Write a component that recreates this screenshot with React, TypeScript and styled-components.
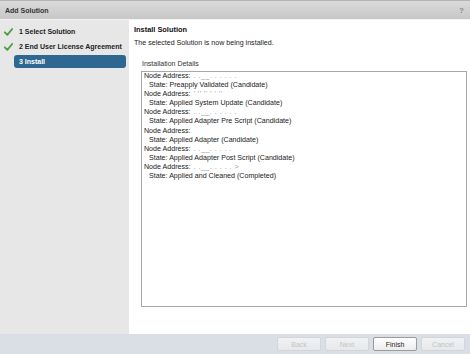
import styled, { createGlobalStyle } from "styled-components";

const GlobalStyle = createGlobalStyle`
  html, body {
    margin: 0;
    padding: 0;
  }
  body {
    font-family: "Liberation Sans", Arial, sans-serif;
    color: #222;
  }
`;

const Window = styled.div`
  width: 470px;
  height: 354px;
  display: flex;
  flex-direction: column;
  overflow: hidden;
  background: #fff;
`;

const TitleBar = styled.div`
  height: 18px;
  flex: none;
  display: flex;
  align-items: center;
  justify-content: space-between;
  padding: 0 6px 0 5px;
  border-top: 1px solid #b4b4b4;
  border-bottom: 1px solid #f2f2f2;
  background: linear-gradient(#dbdbdb, #c7c7c7);
`;

const Title = styled.span`
  font-size: 7px;
  font-weight: bold;
  color: #333;
`;

const Help = styled.span`
  font-size: 8px;
  font-weight: bold;
  color: #8a8a8a;
`;

const Body = styled.div`
  flex: 1;
  display: flex;
  min-height: 0;
`;

const Sidebar = styled.nav`
  width: 129px;
  flex: none;
  background: #e7e7e7;
  padding-top: 5px;
  display: flex;
  flex-direction: column;
  gap: 2px;
`;

const Step = styled.div`
  height: 13px;
  display: flex;
  align-items: center;
`;

const Gutter = styled.div`
  width: 14px;
  flex: none;
  display: flex;
  align-items: center;
  padding-left: 4px;
  box-sizing: border-box;
`;

const StepLabel = styled.div<{ $active?: boolean }>`
  flex: 1;
  height: 13px;
  margin-right: 3px;
  padding-left: 5px;
  display: flex;
  align-items: center;
  font-size: 7px;
  font-weight: bold;
  border-radius: 3px;
  color: ${({ $active }) => ($active ? "#fff" : "#222")};
  background: ${({ $active }) => ($active ? "#2d6792" : "transparent")};
`;

const Content = styled.main`
  flex: 1;
  display: flex;
  flex-direction: column;
  padding: 5px 3px 27px 5px;
`;

const Heading = styled.div`
  font-size: 7.4px;
  font-weight: bold;
  line-height: 10px;
  color: #111;
`;

const Subtitle = styled.div`
  font-size: 7.1px;
  line-height: 10px;
  margin-top: 2.5px;
  color: #222;
`;

const FieldLabel = styled.div`
  font-size: 7px;
  line-height: 10px;
  margin: 11px 0 0 8px;
  color: #333;
`;

const LogBox = styled.div`
  flex: 1;
  margin: 2.5px 0 0 7px;
  border: 1px solid #a8a8a8;
  padding: 0 0 0 1px;
  font-size: 7.1px;
  line-height: 9.1px;
  color: #222;
`;

const LogLine = styled.div<{ $indent?: boolean }>`
  padding-left: ${({ $indent }) => ($indent ? "6px" : "1px")};
  white-space: nowrap;
`;

const Masked = styled.span`
  color: #9c9c9c;
  margin-left: 3px;
  letter-spacing: 0.5px;
`;

const Footer = styled.footer`
  height: 20px;
  flex: none;
  background: #d9dfe5;
  display: flex;
  align-items: center;
  justify-content: flex-end;
  gap: 4px;
  padding-right: 5px;
`;

const Button = styled.button<{ $disabled?: boolean }>`
  width: 44px;
  height: 14px;
  padding: 0;
  font-family: "Liberation Sans", Arial, sans-serif;
  font-size: 7px;
  border-radius: 2px;
  border: 1px solid ${({ $disabled }) => ($disabled ? "#d3d6d9" : "#9c9c9c")};
  color: ${({ $disabled }) => ($disabled ? "#c2c4c6" : "#222")};
  background: ${({ $disabled }) =>
    $disabled ? "linear-gradient(#f1f2f3, #e6e8ea)" : "linear-gradient(#ffffff, #ececec)"};
`;

const Check = () => (
  <svg width="9" height="8" viewBox="0 0 9 8">
    <path d="M0.8 4.3 L3.3 6.8 L8.2 1" fill="none" stroke="#4ea047" strokeWidth="1.9" strokeLinecap="round" strokeLinejoin="round" />
  </svg>
);

const steps = [
  { label: "1  Select Solution", done: true },
  { label: "2  End User License Agreement", done: true },
  { label: "3  Install", active: true },
];

const log = [
  { node: ". .__. . . . . .", state: "Preapply Validated (Candidate)" },
  { node: "' '' '' ' ' ''", state: "Applied System Update (Candidate)" },
  { node: ". .__. . . . . .", state: "Applied Adapter Pre Script (Candidate)" },
  { node: "", state: "Applied Adapter (Candidate)" },
  { node: ". .__. . . . .", state: "Applied Adapter Post Script (Candidate)" },
  { node: ". .__. . . . .   ˃", state: "Applied and Cleaned (Completed)" },
];

export default function App() {
  return (
    <Window>
      <GlobalStyle />
      <TitleBar>
        <Title>Add Solution</Title>
        <Help>?</Help>
      </TitleBar>
      <Body>
        <Sidebar>
          {steps.map((s) => (
            <Step key={s.label}>
              <Gutter>{s.done && <Check />}</Gutter>
              <StepLabel $active={s.active}>{s.label}</StepLabel>
            </Step>
          ))}
        </Sidebar>
        <Content>
          <Heading>Install Solution</Heading>
          <Subtitle>The selected Solution is now being installed.</Subtitle>
          <FieldLabel>Installation Details</FieldLabel>
          <LogBox>
            {log.map((l, i) => (
              <div key={i}>
                <LogLine>
                  Node Address:<Masked>{l.node}</Masked>
                </LogLine>
                <LogLine $indent>State: {l.state}</LogLine>
              </div>
            ))}
          </LogBox>
        </Content>
      </Body>
      <Footer>
        <Button $disabled>Back</Button>
        <Button $disabled>Next</Button>
        <Button>Finish</Button>
        <Button $disabled>Cancel</Button>
      </Footer>
    </Window>
  );
}
